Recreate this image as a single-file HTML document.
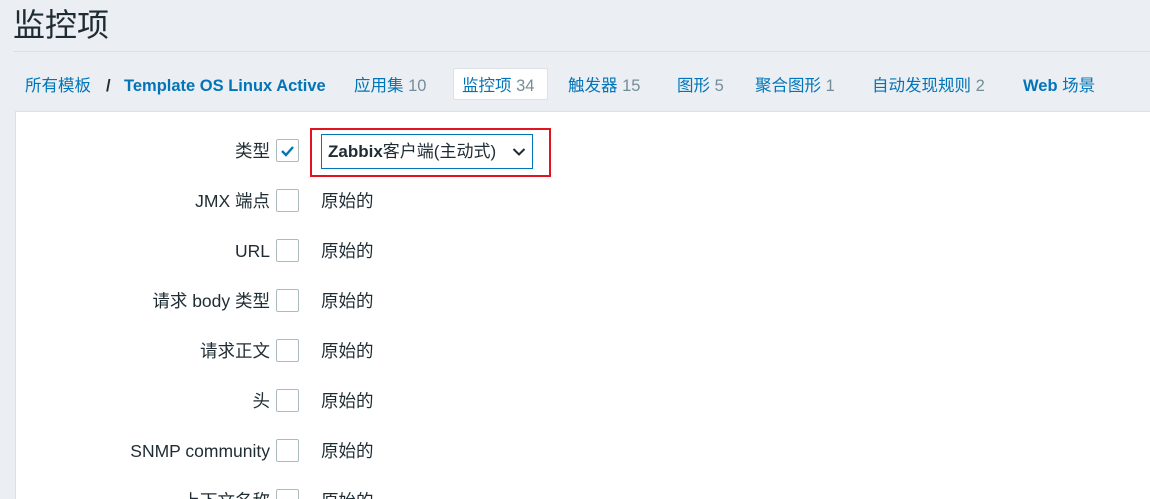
<!DOCTYPE html>
<html><head><meta charset="utf-8"><style>
html,body{margin:0;width:1150px;height:499px;overflow:hidden}
body{background:#ebeef2;font-family:"Liberation Sans","Noto Sans CJK SC",sans-serif;position:relative}
.abs{position:absolute;white-space:nowrap;line-height:20px}
h1{position:absolute;left:13px;top:7px;margin:0;font-weight:normal;font-size:32px;line-height:36px;color:#1f2c33}
.hr{position:absolute;left:13px;right:0;top:51px;height:1px;background:#dde1e6}
.nav{font-size:16.5px;color:#0275b8;top:76px}
.cnt{color:#768d99}
.panel{position:absolute;left:15px;top:111px;right:0;height:400px;background:#fff;border-top:1px solid #dde1e6;border-left:1px solid #dde1e6}
.lbl{font-size:17.5px;color:#1f2c33;right:880px;text-align:right}
.cb{position:absolute;left:276px;width:23px;height:23px;border:1px solid #acbbc2;border-radius:2px;background:#fff;box-sizing:border-box}
.val{left:321px;font-size:17.5px;color:#1f2c33}
</style></head><body>
<h1>监控项</h1>
<div class="hr"></div>
<div class="abs nav" style="left:25px">所有模板</div>
<div class="abs nav" style="left:106px;color:#1f2c33;font-weight:bold">/</div>
<div class="abs nav" style="left:124px;font-weight:bold">Template OS Linux Active</div>
<div class="abs nav" style="left:354px">应用集 <span class="cnt">10</span></div>
<div class="abs" style="left:453px;top:68px;width:95px;height:32px;background:#fff;border:1px solid #dde1e6;border-radius:2px;box-sizing:border-box"></div>
<div class="abs nav" style="left:462px">监控项 <span class="cnt">34</span></div>
<div class="abs nav" style="left:568px">触发器 <span class="cnt">15</span></div>
<div class="abs nav" style="left:677px">图形 <span class="cnt">5</span></div>
<div class="abs nav" style="left:755px">聚合图形 <span class="cnt">1</span></div>
<div class="abs nav" style="left:872px">自动发现规则 <span class="cnt">2</span></div>
<div class="abs nav" style="left:1023px;font-weight:bold">Web <span style="font-weight:normal">场景</span></div>
<div class="panel"></div>

<div class="abs lbl" style="top:141px">类型</div>
<div class="cb" style="top:139px"><svg width="21" height="21" style="position:absolute;left:0;top:0"><path d="M5 11l4 4 7-8" fill="none" stroke="#0275b8" stroke-width="2.4"/></svg></div>
<div class="abs" style="left:310px;top:128px;width:241px;height:49px;border:2px solid #e0141e;box-sizing:border-box"></div>
<div class="abs" style="left:321px;top:134px;width:212px;height:35px;border:1px solid #0275b8;box-sizing:border-box;background:#fff"></div>
<div class="abs" style="left:328px;top:142px;font-size:17px;color:#1f2c33"><b>Zabbix</b>客户端(主动式)</div>
<svg class="abs" style="left:512px;top:147px" width="14" height="10"><path d="M1.5 2l5.5 5.5 5.5-5.5" fill="none" stroke="#1f2c33" stroke-width="2"/></svg>

<div class="abs lbl" style="top:191px">JMX 端点</div><div class="cb" style="top:189px"></div><div class="abs val" style="top:191px">原始的</div>
<div class="abs lbl" style="top:241px">URL</div><div class="cb" style="top:239px"></div><div class="abs val" style="top:241px">原始的</div>
<div class="abs lbl" style="top:291px">请求 body 类型</div><div class="cb" style="top:289px"></div><div class="abs val" style="top:291px">原始的</div>
<div class="abs lbl" style="top:341px">请求正文</div><div class="cb" style="top:339px"></div><div class="abs val" style="top:341px">原始的</div>
<div class="abs lbl" style="top:391px">头</div><div class="cb" style="top:389px"></div><div class="abs val" style="top:391px">原始的</div>
<div class="abs lbl" style="top:441px">SNMP community</div><div class="cb" style="top:439px"></div><div class="abs val" style="top:441px">原始的</div>
<div class="abs lbl" style="top:491px">上下文名称</div><div class="cb" style="top:489px"></div><div class="abs val" style="top:491px">原始的</div>
</body></html>
